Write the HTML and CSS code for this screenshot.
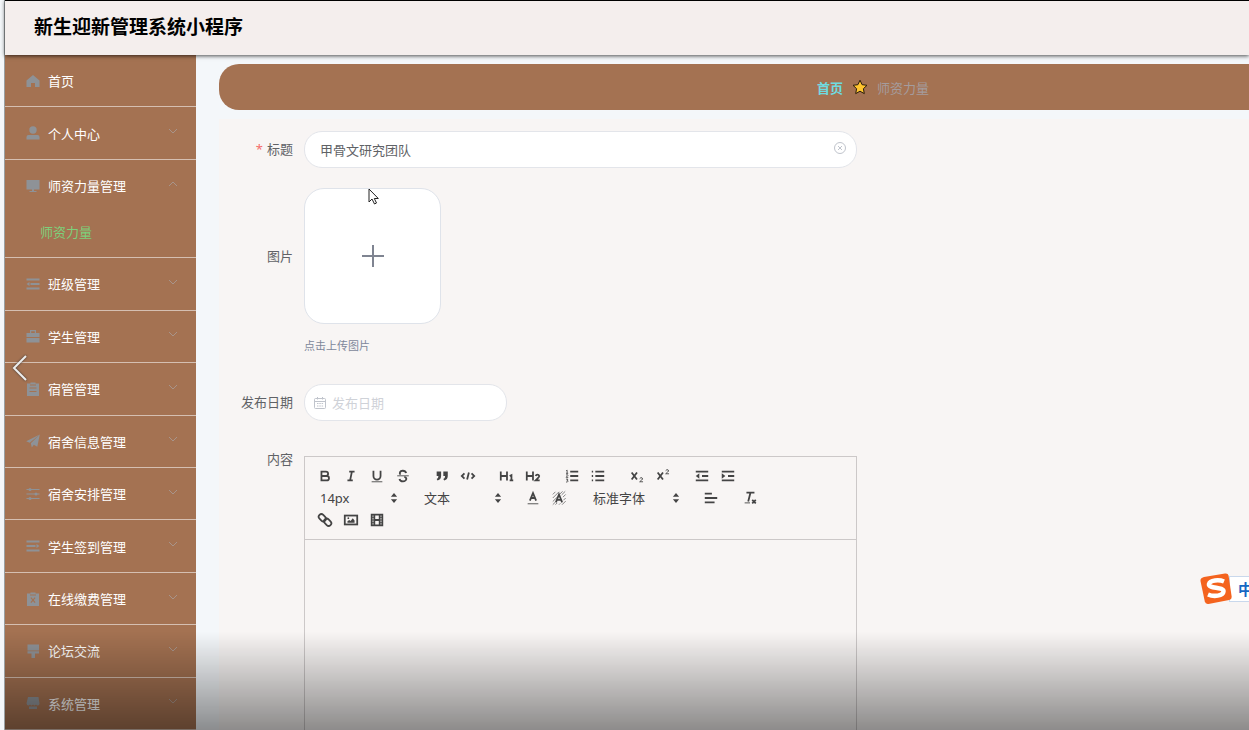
FILE: index.html
```html
<!DOCTYPE html>
<html lang="zh-CN">
<head>
  <meta charset="UTF-8">
  <title>新生迎新管理系统小程序</title>
  <link rel="stylesheet" href="styles.css">
</head>
<body>
  <div class="page">
    <header class="header">
      <h1>新生迎新管理系统小程序</h1>
    </header>

    <div class="container">
      <nav class="sidebar">
        <ul class="menu">
          <li>
            <button type="button" class="menu-item">
              <svg class="menu-icon" viewBox="0 0 14 14"><path d="M7 1 0.5 6.5V13H5V9h4v4h4.5V6.5z"/></svg>
              <span>首页</span>
            </button>
          </li>
          <li>
            <button type="button" class="menu-item">
              <svg class="menu-icon" viewBox="0 0 14 14"><circle cx="7" cy="4" r="3.7"/><path d="M0.5 13.5V11q0-2 2-2h9q2 0 2 2v2.500z"/></svg>
              <span>个人中心</span>
              <svg class="arrow" viewBox="0 0 10 10"><path d="M1 3l4 4 4-4"/></svg>
            </button>
          </li>
          <li>
            <button type="button" class="menu-item">
              <svg class="menu-icon" viewBox="0 0 14 14"><path d="M0.500 1h13v9.500h-13zM6 10.500h2v1.500h-2zM3.500 12h7v1h-7z"/></svg>
              <span>师资力量管理</span>
              <svg class="arrow" viewBox="0 0 10 10"><path d="M1 7l4-4 4 4"/></svg>
            </button>
            <a href="#" class="sub-item">师资力量</a>
          </li>
          <li>
            <button type="button" class="menu-item">
              <svg class="menu-icon" viewBox="0 0 14 14"><path d="M0.500 1.500h13v2h-13zM4.500 6h9v2h-9zM0.500 10.500h13v2h-13zM3.500 5v4L0.500 7z"/></svg>
              <span>班级管理</span>
              <svg class="arrow" viewBox="0 0 10 10"><path d="M1 3l4 4 4-4"/></svg>
            </button>
          </li>
          <li>
            <button type="button" class="menu-item">
              <svg class="menu-icon" viewBox="0 0 14 14"><path d="M4 4V1h6v3h3.500v4h-13V4zM5.200 2.200V4h3.600V2.200zM0.500 9h13v4.500h-13z"/></svg>
              <span>学生管理</span>
              <svg class="arrow" viewBox="0 0 10 10"><path d="M1 3l4 4 4-4"/></svg>
            </button>
          </li>
          <li>
            <button type="button" class="menu-item">
              <svg class="menu-icon" viewBox="0 0 14 14"><path fill-rule="evenodd" d="M1 1.500h3.500V0.500h5v1H13V14H1zM3.500 5.500v1h7v-1zM3.500 9v1h7V9zM4 2.500v1h6v-1z"/></svg>
              <span>宿管管理</span>
              <svg class="arrow" viewBox="0 0 10 10"><path d="M1 3l4 4 4-4"/></svg>
            </button>
          </li>
          <li>
            <button type="button" class="menu-item">
              <svg class="menu-icon" viewBox="0 0 14 14"><path d="M13.800 0.500 0.200 7.200l3.500 1.500zM13.800 0.500 4.800 9.200l1 4.300 2-2.700 3.500 2z"/></svg>
              <span>宿舍信息管理</span>
              <svg class="arrow" viewBox="0 0 10 10"><path d="M1 3l4 4 4-4"/></svg>
            </button>
          </li>
          <li>
            <button type="button" class="menu-item">
              <svg class="menu-icon" viewBox="0 0 14 14"><path d="M0.500 2h13v1h-13zM0.500 6.500h13v1h-13zM0.500 11h13v1h-13z"/><circle cx="4" cy="2.500" r="1.500"/><circle cx="10" cy="7" r="1.500"/><circle cx="4" cy="11.500" r="1.500"/></svg>
              <span>宿舍安排管理</span>
              <svg class="arrow" viewBox="0 0 10 10"><path d="M1 3l4 4 4-4"/></svg>
            </button>
          </li>
          <li>
            <button type="button" class="menu-item">
              <svg class="menu-icon" viewBox="0 0 14 14"><path d="M0.500 1.500h13v2h-13zM0.500 6h9v2h-9zM0.500 10.500h13v2h-13zM10.500 5v4l3-2z"/></svg>
              <span>学生签到管理</span>
              <svg class="arrow" viewBox="0 0 10 10"><path d="M1 3l4 4 4-4"/></svg>
            </button>
          </li>
          <li>
            <button type="button" class="menu-item">
              <svg class="menu-icon" viewBox="0 0 14 14"><path fill-rule="evenodd" d="M1 1.500h3.500V0.500h5v1H13V14H1zM4 2.500v1h6v-1zM4.500 6 6.200 8 4.500 10.200l.8.7L7 8.900l1.700 2 .8-.7L7.800 8 9.500 6l-.8-.7L7 7.200 5.300 5.300z"/></svg>
              <span>在线缴费管理</span>
              <svg class="arrow" viewBox="0 0 10 10"><path d="M1 3l4 4 4-4"/></svg>
            </button>
          </li>
          <li>
            <button type="button" class="menu-item">
              <svg class="menu-icon" viewBox="0 0 14 14"><path d="M1.500 0.500h11.500v6H1.500zM1.500 7.200h11.500v2.300H9V14H5.500V9.500h-4z"/></svg>
              <span>论坛交流</span>
              <svg class="arrow" viewBox="0 0 10 10"><path d="M1 3l4 4 4-4"/></svg>
            </button>
          </li>
          <li>
            <button type="button" class="menu-item">
              <svg class="menu-icon" viewBox="0 0 14 14"><path d="M2 1h10.500l1 6.500q0 2-1.700 2T10 8.500q-.7 1-1.500 1T7 8.500q-.7 1-1.500 1T4 8.500q-.7 1-1.800 1T0.500 7.500zM3 10.500h8V13H3z"/></svg>
              <span>系统管理</span>
              <svg class="arrow" viewBox="0 0 10 10"><path d="M1 3l4 4 4-4"/></svg>
            </button>
          </li>
        </ul>
      </nav>

      <main class="main">
        <div class="breadcrumb">
          <a href="#">首页</a>
          <svg class="star" viewBox="0 0 16 16"><path d="M8 1.200l2.100 4.500 4.900.6-3.600 3.400.9 4.900L8 12.200l-4.300 2.400.9-4.900L1 6.300l4.900-.6z"/></svg>
          <span>师资力量</span>
        </div>

        <form class="panel">
          <div class="form-row">
            <label class="required" for="title">标题</label>
            <div class="input-box">
              <input type="text" id="title" value="甲骨文研究团队">
              <button type="button" class="clear-btn" aria-label="清空">
                <svg viewBox="0 0 14 14"><circle cx="7" cy="7" r="5.500"/><path d="M5 5l4 4M9 5l-4 4"/></svg>
              </button>
            </div>
          </div>

          <div class="form-row upload-row">
            <label for="upload">图片</label>
            <div>
              <button type="button" class="upload" id="upload" aria-label="点击上传图片">
                <svg viewBox="0 0 22 22"><path d="M11 0v22M0 11h22"/></svg>
              </button>
              <div class="upload-tip">点击上传图片</div>
            </div>
          </div>

          <div class="form-row">
            <label for="date">发布日期</label>
            <div class="input-box date-box">
              <svg class="calendar" viewBox="0 0 14 14"><rect x="1.500" y="2.500" width="11" height="10" rx="1"/><path d="M1.500 5.500h11M4.500 1v2.500M9.500 1v2.500M4 7.500h1.500M6.300 7.500h1.500M8.600 7.500h1.500M4 10h1.500M6.300 10h1.500M8.600 10h1.500"/></svg>
              <input type="text" id="date" placeholder="发布日期">
            </div>
          </div>

          <div class="form-row">
            <label for="content">内容</label>
            <div class="editor">
              <div class="toolbar">
                <span class="formats">
                  <button type="button" aria-label="加粗"><svg viewBox="0 0 18 18"><path class="bold" d="M5 4h5a2.500 2.500 0 0 1 0 5H5zM5 9h6a2.500 2.500 0 0 1 0 5H5z"/></svg></button>
                  <button type="button" aria-label="斜体"><svg viewBox="0 0 18 18"><path d="M7 4h6M5 14h6M8 14l2-10"/></svg></button>
                  <button type="button" aria-label="下划线"><svg viewBox="0 0 18 18"><path d="M5 3v6a4 4 0 0 0 8 0V3"/><path class="thin" d="M3 15.500h12"/></svg></button>
                  <button type="button" aria-label="删除线"><svg viewBox="0 0 18 18"><path class="thin" d="M2.500 8.800h13"/><path d="M12.600 5.700C12 3.800 10.500 3 8.600 3.100 5.500 3.300 4.500 5.900 6.200 7.500M10.500 9.800c3.600 1.300 2.700 5-1.500 5.200-2.300 0-3.600-1-4-2.700"/></svg></button>
                </span>
                <span class="formats">
                  <button type="button" aria-label="引用"><svg viewBox="0 0 18 18"><path class="fill" d="M3 4h5v5q0 4-4 5l-1-1.500q2-.8 2-3.500H3zM10.500 4h5v5q0 4-4 5l-1-1.500q2-.8 2-3.500h-2z"/></svg></button>
                  <button type="button" aria-label="代码"><svg viewBox="0 0 18 18"><path d="M5 6 2 9l3 3M13 6l3 3-3 3M10 5l-2 8"/></svg></button>
                </span>
                <span class="formats">
                  <button type="button" aria-label="一级标题"><svg viewBox="0 0 18 18"><path d="M2 4v10M9 4v10M2 9h7M12 9l2-1v6M12 14h4"/></svg></button>
                  <button type="button" aria-label="二级标题"><svg viewBox="0 0 18 18"><path d="M2 4v10M9 4v10M2 9h7M12 9q.5-1.500 2-1.500t2 1.500q0 1-1.500 2.500L12 14h4.500"/></svg></button>
                </span>
                <span class="formats">
                  <button type="button" aria-label="有序列表"><svg viewBox="0 0 18 18"><path d="M7 4h9M7 9h9M7 14h9"/><path class="thin" d="M2.500 3l1-.6V6M2.300 6h2.400M2.300 8q2-1.200 2.200.2L2.400 10.500h2.400M2.300 12.500h2L3.500 14q1.300 0 1 1t-2.200.8"/></svg></button>
                  <button type="button" aria-label="无序列表"><svg viewBox="0 0 18 18"><path d="M6 4h10M6 9h10M6 14h10M2 4h1.500M2 9h1.500M2 14h1.500"/></svg></button>
                </span>
                <span class="formats">
                  <button type="button" aria-label="下标"><svg viewBox="0 0 18 18"><path d="M3 5l6 8M9 5l-6 8"/><path class="thin" d="M12 12q1.500-2 2.800-.8t-.5 2.300L12 15.500h3.800"/></svg></button>
                  <button type="button" aria-label="上标"><svg viewBox="0 0 18 18"><path d="M3 5l6 8M9 5l-6 8"/><path class="thin" d="M12 3q1.500-2 2.800-.8t-.5 2.300L12 6.500h3.800"/></svg></button>
                </span>
                <span class="formats">
                  <button type="button" aria-label="减少缩进"><svg viewBox="0 0 18 18"><path d="M2 4h14M9 9h7M2 14h14"/><path class="fill" d="M6 6v6L2 9z"/></svg></button>
                  <button type="button" aria-label="增加缩进"><svg viewBox="0 0 18 18"><path d="M2 4h14M9 9h7M2 14h14"/><path class="fill" d="M2 6v6l4-3z"/></svg></button>
                </span>
                <span class="formats picker">
                  <select aria-label="字号"><option>14px</option></select>
                  <svg viewBox="0 0 18 18"><path class="fill" d="M5.500 7.500 9 3.500l3.500 4zM5.500 10.500h7L9 14.500z"/></svg>
                </span>
                <span class="formats picker">
                  <select aria-label="段落"><option>文本</option></select>
                  <svg viewBox="0 0 18 18"><path class="fill" d="M5.500 7.500 9 3.500l3.500 4zM5.500 10.500h7L9 14.500z"/></svg>
                </span>
                <span class="formats">
                  <button type="button" aria-label="文字颜色"><svg viewBox="0 0 18 18"><path d="M5.500 12 9 3.500l3.500 8.500M6.500 9h5"/><path class="thin" d="M3 15.500h12"/></svg></button>
                  <button type="button" aria-label="背景颜色"><svg viewBox="0 0 18 18"><path class="hatch" d="M2 5l3-3M2 9l7-7M2 13l5-5M2 16.500l3-3M10 4.500l3-3M5 16.500l2-2M9 16.500l1.500-1.500M12 5.500l4-4M13.500 8l3-3M14 11.500l2.500-2.500M12.500 16.500l4-4"/><path d="M5.500 14 9 5l3.500 9M6.500 11h5"/></svg></button>
                </span>
                <span class="formats picker font-picker">
                  <select aria-label="字体"><option>标准字体</option></select>
                  <svg viewBox="0 0 18 18"><path class="fill" d="M5.500 7.500 9 3.500l3.500 4zM5.500 10.500h7L9 14.500z"/></svg>
                </span>
                <span class="formats">
                  <button type="button" aria-label="对齐"><svg viewBox="0 0 18 18"><path d="M2 4h8M2 9h14M2 14h11"/></svg></button>
                </span>
                <span class="formats">
                  <button type="button" aria-label="清除格式"><svg viewBox="0 0 18 18"><path d="M5 3h9M9.500 3 7 13M11.500 11l4 4M15.500 11l-4 4"/><path class="thin" d="M3 14.500h6"/></svg></button>
                </span>
                <span class="formats">
                  <button type="button" aria-label="链接"><svg viewBox="0 0 18 18"><rect x="1.500" y="3.500" width="9" height="6" rx="3" transform="rotate(45 6 6.500)"/><rect x="7.500" y="8.500" width="9" height="6" rx="3" transform="rotate(45 12 11.500)"/></svg></button>
                  <button type="button" aria-label="图片"><svg viewBox="0 0 18 18"><rect x="2" y="4" width="14" height="10"/><circle class="fill" cx="6" cy="7" r="1"/><path class="fill" d="M5 12v-1.500l2-1.500 1.500 1L11 7l2 2.500V12z"/></svg></button>
                  <button type="button" aria-label="视频"><svg viewBox="0 0 18 18"><path d="M3 3h12v12H3zM6 3v12M12 3v12M6 9h6"/><path class="thin" d="M3 6h3M3 9h3M3 12h3M12 6h3M12 9h3M12 12h3"/></svg></button>
                </span>
              </div>
              <textarea id="content"></textarea>
            </div>
          </div>
        </form>
      </main>
    </div>
  </div>

  <button type="button" class="prev-btn" aria-label="上一张">
    <svg viewBox="0 0 16 26"><path d="M14 1 2 13l12 12"/></svg>
  </button>

  <svg class="cursor" viewBox="0 0 12 18"><path d="M1 1v13l3-3 2.500 5 2-1L6.300 10.500h4z"/></svg>

  <div class="ime-bar">
    <svg class="ime-logo" viewBox="0 0 34 34">
      <path d="M5 5 26 1.500q3-.5 3.600 2.300l3 20.500q.4 3-2.500 3.800L9.500 32q-3 .5-3.700-2.400L1.500 9Q1 6 5 5z" fill="#f4631e"/>
      <path d="M25 9.500c-5-2-14-1.500-15 2.500-1 5 15 2.500 14.500 7.500-.5 4.500-9.500 5.500-15.500 3" fill="none" stroke="#fff" stroke-width="4.500"/>
    </svg>
    <span>中</span>
  </div>

  <div class="bottom-shade"></div>
</body>
</html>
```
FILE: styles.css
```css
* {
  box-sizing: border-box;
}
body {
  margin: 0;
  height: 100vh;
  overflow: hidden;
  background-color: #f4f7fa;
  color: #606266;
  font-family: "Noto Sans", "Noto Sans CJK SC", sans-serif;
  font-size: 13px;
}
button, input, select, textarea {
  font: inherit;
  color: inherit;
  background: none;
  border: none;
  padding: 0;
  margin: 0;
  outline: none;
}
button {
  cursor: pointer;
}
a {
  text-decoration: none;
}
.page {
  display: flex;
  flex-direction: column;
  height: 100vh;
  margin-left: 4px;
  border-left: 1px solid #9aa0a3;
}
.header {
  position: relative;
  z-index: 2;
  flex: none;
  display: flex;
  align-items: center;
  height: 55px;
  padding: 0 29px 3px;
  border-top: 1px solid #000;
  background-color: #f4eeed;
  box-shadow: 0 1px 4px rgba(0, 0, 0, 0.7);
}
h1 {
  margin: 0;
  color: #000;
  font-size: 19px;
  line-height: 28px;
}
.container {
  flex: 1;
  display: flex;
  min-height: 0;
}

/* sidebar */
.sidebar {
  flex: none;
  width: 191px;
  background-color: #a47252;
}
.menu {
  display: flex;
  flex-direction: column;
  height: 100%;
  margin: 0;
  padding: 0;
  list-style: none;
}
.menu li {
  flex: 1 0 auto;
  display: flex;
  flex-direction: column;
  border-bottom: 1px solid #d5bfb1;
}
.menu-item {
  flex: 1;
  display: flex;
  align-items: center;
  width: 100%;
  min-height: 48px;
  padding: 0 18px 0 21px;
  color: #fff;
  text-align: left;
}
.menu-item span {
  flex: 1;
}
.menu-icon {
  width: 14px;
  height: 14px;
  margin-right: 8px;
  fill: #8e9297;
}
.arrow {
  width: 10px;
  height: 10px;
  margin-bottom: 4px;
  fill: none;
  stroke: #a8948a;
}
.sub-item {
  height: 46px;
  padding-left: 35px;
  color: #7dd07b;
  line-height: 43px;
}

/* content */
.main {
  flex: 1;
  display: flex;
  flex-direction: column;
  min-width: 0;
  padding: 9px 0 0 23px;
}
.breadcrumb {
  flex: none;
  display: flex;
  align-items: center;
  justify-content: center;
  gap: 9px;
  height: 46px;
  padding-left: 278px;
  border-radius: 20px 0 0 20px;
  background-color: #a47252;
  color: #a49c9d;
}
.breadcrumb a {
  color: #6fdbe0;
  font-weight: bold;
}
.star {
  width: 16px;
  height: 16px;
  fill: #ffc52e;
  stroke: #2a1c0c;
}
.panel {
  flex: 1;
  display: flex;
  flex-direction: column;
  gap: 20px;
  min-height: 0;
  margin-top: 9px;
  padding-top: 12px;
  background-color: #f8f5f4;
  overflow: hidden;
}
.form-row {
  display: grid;
  grid-template-columns: 74px minmax(0, 553px);
  column-gap: 11px;
}
.form-row label {
  line-height: 36px;
  text-align: right;
}
.form-row.upload-row label {
  line-height: 136px;
}
.required::before {
  content: "*";
  margin-right: 4px;
  color: #f56c6c;
}
.input-box {
  display: flex;
  align-items: center;
  height: 37px;
  padding: 0 9px 0 15px;
  border: 1px solid #e3e5ea;
  border-radius: 18px;
  background-color: #fff;
}
.input-box input {
  flex: 1;
  min-width: 0;
}
.input-box input::placeholder {
  color: #cfd2d8;
}
.input-box svg {
  display: block;
  width: 14px;
  height: 14px;
  fill: none;
  stroke: #c0c4cc;
}
.clear-btn {
  padding-bottom: 4px;
}
.date-box {
  width: 203px;
  padding-left: 8px;
}
.calendar {
  margin-right: 5px;
}
.upload {
  display: flex;
  align-items: center;
  justify-content: center;
  width: 137px;
  height: 136px;
  border: 1px solid #dfe3ea;
  border-radius: 20px;
  background-color: #fff;
}
.upload svg {
  width: 22px;
  height: 22px;
  stroke: #7f8491;
  stroke-width: 2;
}
.upload-tip {
  margin-top: 12px;
  padding-bottom: 8px;
  color: #7d879b;
  font-size: 11px;
  line-height: 20px;
}

/* rich text editor */
.editor {
  margin-top: 15px;
  border: 1px solid #ccc8c8;
}
.toolbar {
  display: flex;
  flex-wrap: wrap;
  padding: 8px 7px;
  border-bottom: 1px solid #ccc8c8;
}
.formats {
  display: flex;
  margin-right: 13px;
}
.toolbar button {
  display: flex;
  align-items: center;
  justify-content: center;
  width: 26px;
  height: 22px;
}
.toolbar svg {
  width: 16px;
  height: 16px;
  fill: none;
  stroke: #444;
  stroke-width: 2;
}
.toolbar .thin {
  stroke-width: 1;
}
.toolbar .hatch {
  stroke-width: 1;
  stroke: #777;
}
.toolbar .fill {
  fill: #444;
  stroke: none;
}
.picker {
  display: grid;
  align-items: center;
  width: 91px;
  height: 22px;
  color: #444;
}
.picker select, .picker svg {
  grid-area: 1 / 1;
}
.picker select {
  width: 100%;
  height: 22px;
  padding-left: 8px;
  appearance: none;
}
.picker svg {
  justify-self: end;
  margin-right: 1px;
  pointer-events: none;
}
.font-picker {
  width: 100px;
}
textarea {
  display: block;
  width: 100%;
  height: 280px;
  padding: 12px 15px;
  resize: none;
}

/* things lying over the page */
.prev-btn {
  position: fixed;
  top: 50%;
  left: 12px;
}
.prev-btn svg {
  display: block;
  width: 16px;
  height: 26px;
  margin-top: -10px;
  fill: none;
  stroke: #eee;
  stroke-width: 2;
  filter: drop-shadow(0 0 1px #333);
}
.cursor {
  position: absolute;
  top: 188px;
  left: 368px;
  width: 12px;
  height: 18px;
  fill: #fff;
  stroke: #222;
}
.ime-bar {
  position: fixed;
  right: 0;
  bottom: 124px;
  display: flex;
  align-items: center;
  color: #1668c4;
  font-size: 15px;
  font-weight: bold;
}
.ime-logo {
  position: relative;
  z-index: 1;
  width: 34px;
  height: 34px;
}
.ime-bar span {
  width: 20px;
  height: 26px;
  margin-left: -4px;
  padding-left: 8px;
  border: 1px solid #c9d8ec;
  border-right: none;
  background-color: #fff;
  line-height: 24px;
  overflow: hidden;
}
.bottom-shade {
  position: fixed;
  right: 0;
  bottom: 0;
  left: 5px;
  height: 98px;
  background: linear-gradient(rgba(0, 0, 0, 0), rgba(0, 0, 0, 0.43));
  pointer-events: none;
}
```
